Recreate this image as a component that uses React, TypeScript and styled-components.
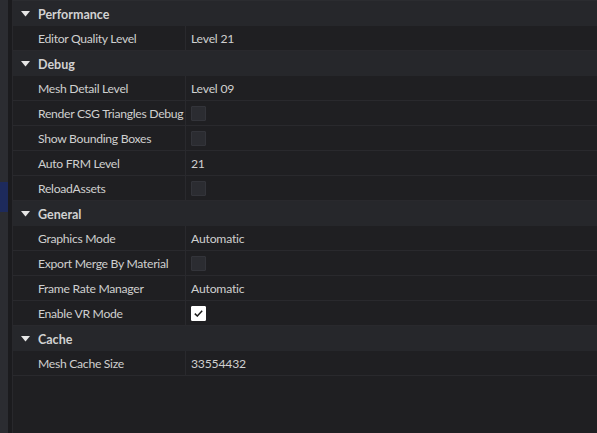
import React from "react";
import styled, { createGlobalStyle } from "styled-components";

const Global = createGlobalStyle`
  html, body { margin: 0; padding: 0; background: #1f1f22; }
  body { font-family: Lato, "Noto Sans", sans-serif; }
`;

const Shell = styled.div`
  display: flex;
  height: 433px;
  width: 597px;
  overflow: hidden;
  background: #1f1f22;
`;

const Strip = styled.div`
  width: 8px;
  flex: none;
  background: #2b2c31;
  position: relative;
`;

const StripMark = styled.div`
  position: absolute;
  left: 0;
  top: 182px;
  width: 8px;
  height: 30px;
  background: #1d2a5c;
`;

const Gutter = styled.div`
  width: 4px;
  flex: none;
  background: #1b1b1e;
`;

const Panel = styled.div`
  flex: 1;
  display: flex;
  flex-direction: column;
  border-left: 1px solid #28282c;
  border-top: 1px solid #2b2c30;
  background: #1f1f22;
`;

const HeaderRow = styled.div`
  display: flex;
  align-items: center;
  height: 25px;
  box-sizing: border-box;
  padding-top: 2px;
  background: #26272b;
  color: #d2d2d2;
  font-weight: 700;
  font-size: 12.5px;
`;

const Arrow = styled.span`
  width: 25px;
  display: flex;
  justify-content: center;
  margin-top: -1px;
  svg { display: block; }
`;

const PropRow = styled.div`
  display: flex;
  height: 25px;
  box-sizing: border-box;
  border-bottom: 1px solid #29292d;
  background: #1f1f22;
  color: #cfcfcf;
  font-size: 12.2px;
`;

const Label = styled.div`
  width: 173px;
  flex: none;
  box-sizing: border-box;
  padding-left: 25px;
  padding-top: 1px;
  display: flex;
  align-items: center;
  border-right: 1px solid #29292d;
  white-space: nowrap;
  overflow: hidden;
  letter-spacing: -0.3px;
`;

const Value = styled.div`
  flex: 1;
  padding-left: 5px;
  padding-top: 1px;
  display: flex;
  align-items: center;
  letter-spacing: -0.2px;
`;

const Check = styled.div<{ $on?: boolean }>`
  width: 15px;
  height: 15px;
  box-sizing: border-box;
  border-radius: 1px;
  background: ${(p) => (p.$on ? "#ffffff" : "#2b2c31")};
  border: 1px solid ${(p) => (p.$on ? "#ffffff" : "#33343a")};
  display: flex;
  align-items: center;
  justify-content: center;
  margin-top: -1px;
`;

type Item =
  | { kind: "header"; title: string }
  | { kind: "text"; label: string; value: string }
  | { kind: "check"; label: string; on?: boolean };

const items: Item[] = [
  { kind: "header", title: "Performance" },
  { kind: "text", label: "Editor Quality Level", value: "Level 21" },
  { kind: "header", title: "Debug" },
  { kind: "text", label: "Mesh Detail Level", value: "Level 09" },
  { kind: "check", label: "Render CSG Triangles Debug" },
  { kind: "check", label: "Show Bounding Boxes" },
  { kind: "text", label: "Auto FRM Level", value: "21" },
  { kind: "check", label: "ReloadAssets" },
  { kind: "header", title: "General" },
  { kind: "text", label: "Graphics Mode", value: "Automatic" },
  { kind: "check", label: "Export Merge By Material" },
  { kind: "text", label: "Frame Rate Manager", value: "Automatic" },
  { kind: "check", label: "Enable VR Mode", on: true },
  { kind: "header", title: "Cache" },
  { kind: "text", label: "Mesh Cache Size", value: "33554432" },
];

const Tri = () => (
  <svg width="9" height="6" viewBox="0 0 9 6">
    <path d="M0 0 H9 L4.5 5.5 Z" fill="#e6e6e6" />
  </svg>
);

const Tick = () => (
  <svg width="9" height="7" viewBox="0 0 9 7">
    <path d="M0.8 3.6 L3.3 6 L8.2 0.8" fill="none" stroke="#1a1a1a" strokeWidth="1.5" />
  </svg>
);

export default function App() {
  return (
    <>
      <Global />
      <Shell>
        <Strip>
          <StripMark />
        </Strip>
        <Gutter />
        <Panel>
          {items.map((it, i) =>
            it.kind === "header" ? (
              <HeaderRow key={i}>
                <Arrow>
                  <Tri />
                </Arrow>
                {it.title}
              </HeaderRow>
            ) : (
              <PropRow key={i}>
                <Label>{it.label}</Label>
                <Value>
                  {it.kind === "text" ? (
                    it.value
                  ) : (
                    <Check $on={it.on}>{it.on && <Tick />}</Check>
                  )}
                </Value>
              </PropRow>
            )
          )}
        </Panel>
      </Shell>
    </>
  );
}
